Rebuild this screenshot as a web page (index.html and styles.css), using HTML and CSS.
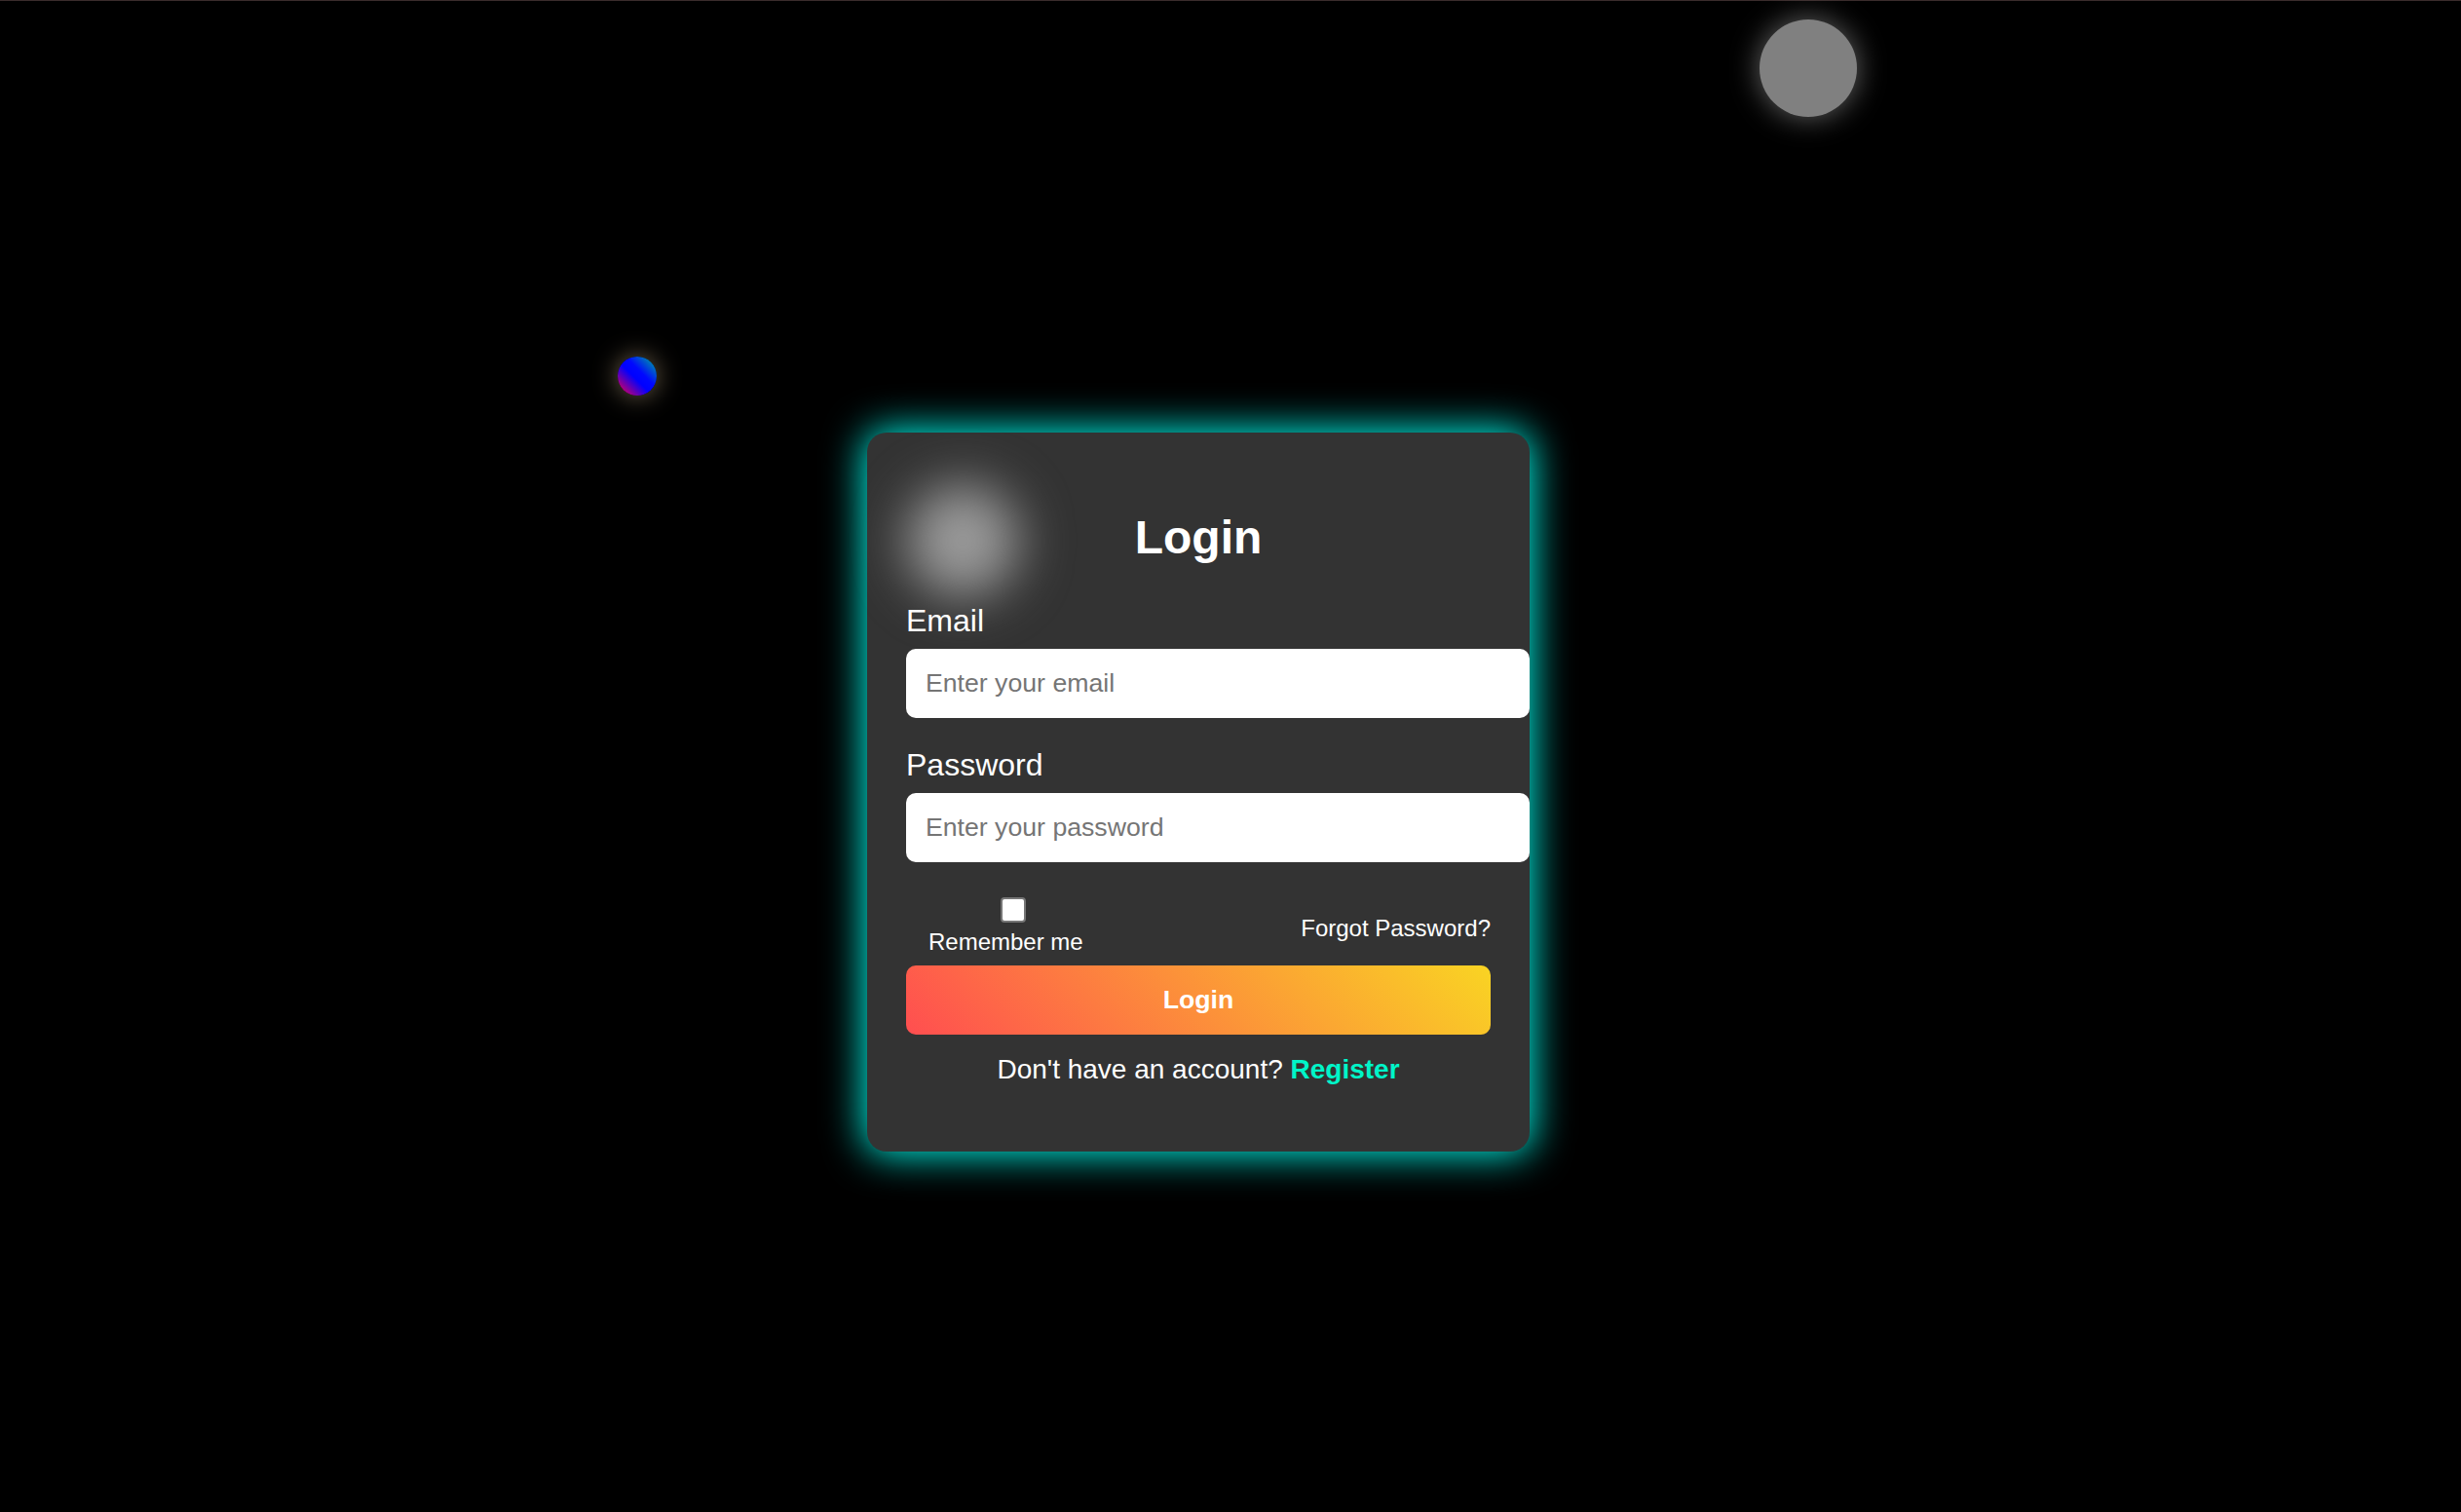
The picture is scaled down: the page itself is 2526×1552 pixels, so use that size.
FILE: index.html
```html
<!DOCTYPE html>
<html lang="en">
<head>
<meta charset="utf-8">
<title>Login</title>
<link rel="stylesheet" href="styles.css">
</head>
<body>
<div class="topline"></div>
<div class="orb orb-gray"></div>
<div class="orb orb-color"></div>
<main class="stage">
  <div class="card">
    <div class="card-blur"></div>
    <h2 class="title">Login</h2>
    <form class="form">
      <div class="group">
        <label class="label" for="email">Email</label>
        <input class="field" type="email" id="email" placeholder="Enter your email">
      </div>
      <div class="group">
        <label class="label" for="password">Password</label>
        <input class="field" type="password" id="password" placeholder="Enter your password">
      </div>
      <div class="options">
        <div class="remember">
          <input class="check" type="checkbox" id="remember">
          <label class="remember-text" for="remember">Remember me</label>
        </div>
        <a class="forgot" href="#">Forgot Password?</a>
      </div>
      <button class="btn" type="button">Login</button>
      <p class="signup">Don't have an account? <a class="register" href="#">Register</a></p>
    </form>
  </div>
</main>
</body>
</html>
```
FILE: styles.css
```css
html, body {
  margin: 0;
  padding: 0;
}
body {
  background: #000;
  height: 100vh;
  display: flex;
  flex-direction: column;
  overflow: hidden;
  font-family: "Liberation Sans", Arial, sans-serif;
  color: #fff;
}
.topline {
  height: 1px;
  background: #3a2c2c;
  flex: none;
}
.stage {
  flex: 1;
  display: flex;
  align-items: center;
  justify-content: center;
}
.orb {
  position: absolute;
  border-radius: 50%;
}
.orb-gray {
  left: 1806px;
  top: 20px;
  width: 100px;
  height: 100px;
  background: #808080;
  box-shadow: 0 0 30px rgba(255, 255, 255, 0.4);
}
.orb-color {
  left: 634px;
  top: 366px;
  width: 40px;
  height: 40px;
  background: linear-gradient(45deg, #ff0040 0%, #0000ff 45%, #0008ff 60%, #00b890 100%);
  box-shadow: 0 0 26px rgba(255, 225, 175, 0.45);
}
.card {
  position: relative;
  width: 600px;
  padding: 40px;
  margin: 73px 66px 0 0;
  background: #333;
  border-radius: 20px;
  box-shadow: 0 0 40px 2px rgba(0, 255, 240, 1);
}
.card-blur {
  position: absolute;
  left: 40px;
  top: 53px;
  width: 116px;
  height: 116px;
  border-radius: 50%;
  background: #9a9a9a;
  filter: blur(26px);
}
.title {
  position: relative;
  margin: 39.84px 0;
  font-size: 48px;
  font-weight: bold;
  text-align: center;
}
.form {
  position: relative;
}
.group {
  margin-bottom: 30px;
}
.label {
  display: block;
  font-size: 32px;
  margin-bottom: 10px;
}
.field {
  display: block;
  width: 100%;
  padding: 20px;
  border: none;
  border-radius: 10px;
  background: #fff;
  font-family: "Liberation Sans", Arial, sans-serif;
  font-size: 26.67px;
  color: #000;
  outline: none;
}
.field::placeholder {
  color: #757575;
}
.options {
  display: flex;
  justify-content: space-between;
  align-items: center;
}
.remember {
  display: flex;
  flex-direction: column;
  align-items: center;
  padding: 0 0 10px 23px;
}
.check {
  appearance: none;
  -webkit-appearance: none;
  box-sizing: border-box;
  width: 26px;
  height: 26px;
  margin: 6px 0 6px 15px;
  background: #fff;
  border: 2px solid #767676;
  border-radius: 4px;
}
.remember-text {
  font-size: 24px;
}
.forgot {
  font-size: 24px;
  color: #fff;
  text-decoration: none;
}
.btn {
  display: block;
  width: 100%;
  height: 71px;
  border: none;
  border-radius: 10px;
  background: linear-gradient(45deg, #ff4e50, #f9d423);
  color: #fff;
  font-family: "Liberation Sans", Arial, sans-serif;
  font-size: 26.67px;
  font-weight: bold;
}
.signup {
  margin: 20px 0 28px;
  font-size: 28px;
  text-align: center;
}
.register {
  color: #00f5c8;
  font-weight: bold;
  text-decoration: none;
}
```
